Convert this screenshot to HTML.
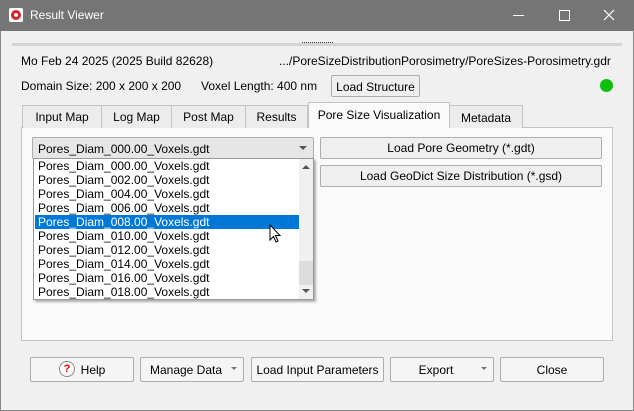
<!DOCTYPE html>
<html><head><style>
*{box-sizing:border-box;margin:0;padding:0}
body{width:634px;height:411px;background:#f0f0f0;font-family:"Liberation Sans",sans-serif;font-size:12px;color:#000;position:relative;overflow:hidden}
.a{position:absolute;white-space:nowrap}
.btn{position:absolute;background:#f5f5f5;border:1px solid #adadad;border-radius:2px;text-align:center;line-height:22px}
.tab{position:absolute;top:105px;height:23px;border:1px solid #c4c4c4;border-bottom:none;background:#ececec;text-align:center;line-height:22px}
.it{position:absolute;left:1px;height:14px;line-height:14px;padding-left:3px;width:265px}
.arr{position:absolute;width:0;height:0;border-left:4px solid transparent;border-right:4px solid transparent}
</style></head><body>
<div class="a" style="left:0;top:0;width:634px;height:31px;background:#757575"></div>
<div class="a" style="left:9px;top:8px;width:14px;height:14px;background:#fff;border-radius:2px"></div>
<div class="a" style="left:11px;top:10px;width:10px;height:10px;background:#d9202a;border-radius:50%"></div>
<div class="a" style="left:14px;top:13px;width:4px;height:4px;background:#fff;border-radius:50%"></div>
<div class="a" style="left:30px;top:8px;color:#fff;font-size:12px">Result Viewer</div>
<div class="a" style="left:513px;top:15px;width:11px;height:1px;background:#fff"></div>
<div class="a" style="left:559px;top:10px;width:11px;height:11px;border:1px solid #fff"></div>
<svg class="a" style="left:603px;top:9px" width="12" height="12"><path d="M1 1L11 11M11 1L1 11" stroke="#fff" stroke-width="1.2"/></svg>
<div class="a" style="left:0;top:31px;width:1px;height:380px;background:#888"></div>
<div class="a" style="left:633px;top:31px;width:1px;height:380px;background:#888"></div>
<div class="a" style="left:0;top:410px;width:634px;height:1px;background:#888"></div>
<div class="a" style="left:12px;top:43px;width:610px;height:3px;background:#d4d4d4"></div>
<div class="a" style="left:302px;top:42px;width:31px;height:1px;border-top:1px dotted #333"></div>
<div class="a" style="left:21px;top:54px">Mo Feb 24 2025 (2025 Build 82628)</div>
<div class="a" style="left:279px;top:54px">.../PoreSizeDistributionPorosimetry/PoreSizes-Porosimetry.gdr</div>
<div class="a" style="left:21px;top:79px">Domain Size: 200 x 200 x 200</div>
<div class="a" style="left:201px;top:79px">Voxel Length: 400 nm</div>
<div class="btn" style="left:331px;top:75px;width:89px;height:22px;background:#efefef">Load Structure</div>
<div class="a" style="left:600px;top:79px;width:13px;height:13px;border-radius:50%;background:#0ec00e"></div>
<div class="a" style="left:21px;top:127px;width:592px;height:214px;background:#fafafa;border:1px solid #c4c4c4"></div>
<div class="tab" style="left:22px;width:80px">Input Map</div>
<div class="tab" style="left:101px;width:71px">Log Map</div>
<div class="tab" style="left:171px;width:75px">Post Map</div>
<div class="tab" style="left:245px;width:63px">Results</div>
<div class="tab" style="left:308px;top:102px;height:26px;width:142px;background:#fafafa;line-height:24px">Pore Size Visualization</div>
<div class="tab" style="left:449px;width:74px;line-height:25px">Metadata</div>
<div class="btn" style="left:320px;top:137px;width:282px;height:22px;background:#efefef;line-height:21px">Load Pore Geometry (*.gdt)</div>
<div class="btn" style="left:320px;top:165px;width:282px;height:22px;background:#efefef;line-height:21px">Load GeoDict Size Distribution (*.gsd)</div>
<div class="btn" style="left:32px;top:137px;width:282px;height:22px;background:#e6e6e6;text-align:left;padding-left:5px;line-height:23px">Pores_Diam_000.00_Voxels.gdt</div>
<div class="arr" style="left:299px;top:146px;border-top:4px solid #555"></div>
<div class="a" style="left:33px;top:158px;width:281px;height:142px;background:#fff;border:1px solid #999;box-shadow:2px 2px 2px rgba(0,0,0,.3)">
<div class="it" style="top:0">Pores_Diam_000.00_Voxels.gdt</div>
<div class="it" style="top:14px">Pores_Diam_002.00_Voxels.gdt</div>
<div class="it" style="top:28px">Pores_Diam_004.00_Voxels.gdt</div>
<div class="it" style="top:42px">Pores_Diam_006.00_Voxels.gdt</div>
<div class="it" style="top:56px;background:#0078d7;color:#fff">Pores_Diam_008.00_Voxels.gdt</div>
<div class="it" style="top:70px">Pores_Diam_010.00_Voxels.gdt</div>
<div class="it" style="top:84px">Pores_Diam_012.00_Voxels.gdt</div>
<div class="it" style="top:98px">Pores_Diam_014.00_Voxels.gdt</div>
<div class="it" style="top:112px">Pores_Diam_016.00_Voxels.gdt</div>
<div class="it" style="top:126px">Pores_Diam_018.00_Voxels.gdt</div>
<div class="a" style="left:265px;top:0;width:14px;height:140px;background:#f0f0f0"></div>
<div class="a" style="left:265px;top:102px;width:14px;height:24px;background:#dcdcdc"></div>
<div class="arr" style="left:268px;top:6px;border-bottom:4px solid #555"></div>
<div class="arr" style="left:268px;top:130px;border-top:4px solid #555"></div>
</div>
<svg class="a" style="left:269px;top:224px" width="14" height="20" viewBox="0 0 14 20"><path d="M1 1 L1 16 L4.5 12.5 L7 18 L9 17 L6.5 11.5 L11 11.5 Z" fill="#fff" stroke="#000" stroke-width="1"/></svg>
<div class="btn" style="left:30px;top:357px;width:104px;height:25px;line-height:24px;padding-left:22px">Help</div>
<div class="a" style="left:59px;top:361px;width:16px;height:16px;border:1px solid #888;border-radius:50%;background:#fff;color:#d00;font-size:11px;line-height:14px;font-weight:bold;text-align:center">?</div>
<div class="btn" style="left:140px;top:357px;width:104px;height:25px;line-height:24px;padding-right:12px">Manage Data</div>
<div class="arr" style="left:231px;top:367px;border-top:3px solid #777;border-left-width:3px;border-right-width:3px"></div>
<div class="btn" style="left:251px;top:357px;width:133px;height:25px;line-height:24px">Load Input Parameters</div>
<div class="btn" style="left:390px;top:357px;width:104px;height:25px;line-height:24px;padding-right:12px">Export</div>
<div class="arr" style="left:481px;top:367px;border-top:3px solid #777;border-left-width:3px;border-right-width:3px"></div>
<div class="btn" style="left:500px;top:357px;width:104px;height:25px;line-height:24px">Close</div>
</body></html>
